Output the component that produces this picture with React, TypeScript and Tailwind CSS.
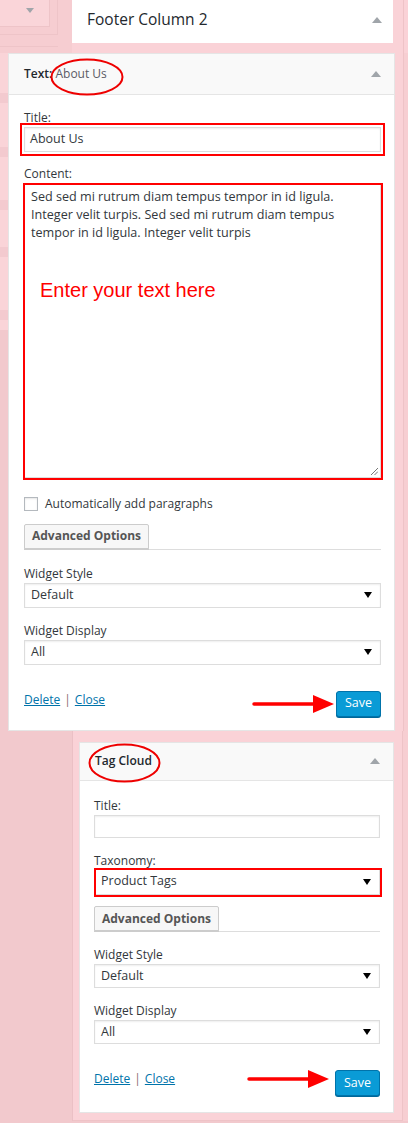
import React from "react";

function UpArrow() {
  return <span className="h-0 w-0 border-x-[5px] border-b-[6px] border-x-transparent border-b-[#a0a5aa]" />;
}

function DownCaret() {
  return <span className="h-0 w-0 border-x-[4px] border-t-[6px] border-x-transparent border-t-black" />;
}

function Label({ children }: { children: React.ReactNode }) {
  return <div className="text-[12px] leading-[18px] text-[#32373c]">{children}</div>;
}

function Select({ value, h = "h-[25px]" }: { value: string; h?: string }) {
  return (
    <div className={`flex ${h} items-center justify-between border border-[#ddd] bg-white pl-[6px] pr-[8px] text-[12.5px] text-[#32373c] shadow-[inset_0_1px_2px_rgba(0,0,0,0.07)]`}>
      <span>{value}</span>
      <DownCaret />
    </div>
  );
}

function RedArrow() {
  return (
    <svg width="82" height="18" viewBox="0 0 82 18">
      <line x1="2" y1="9" x2="64" y2="9" stroke="#f00" strokeWidth="3.5" strokeLinecap="round" />
      <polygon points="61,0 82,9 61,18" fill="#f00" />
    </svg>
  );
}

function Ellipse({ w, h }: { w: number; h: number }) {
  return (
    <svg width={w} height={h} viewBox={`0 0 ${w} ${h}`}>
      <ellipse cx={w / 2} cy={h / 2} rx={w / 2 - 1.5} ry={h / 2 - 1.5} fill="none" stroke="#e00" strokeWidth="2" />
    </svg>
  );
}

function AdvancedOptions() {
  return (
    <div className="border-b border-[#ddd]">
      <button className="h-[25px] w-[125px] rounded-t-[2px] border border-[#ccc] bg-[#f7f7f7] text-[12px] font-bold text-[#555] shadow-[0_1px_0_#ccc]">
        Advanced Options
      </button>
    </div>
  );
}

function WidgetFooter({ arrowGap, arrowShift }: { arrowGap: string; arrowShift: string }) {
  return (
    <div className="flex items-center">
      <div className="flex self-start text-[12px] leading-[18px]">
        <a className="text-[#0073aa] underline">Delete</a>
        <span className="mx-[4px] text-[#8a6a70]">|</span>
        <a className="text-[#0073aa] underline">Close</a>
      </div>
      <div className="flex-1" />
      <div className={`${arrowGap} ${arrowShift}`}>
        <RedArrow />
      </div>
      <button className="h-[26px] w-[45px] rounded-[3px] border border-[#0073aa] bg-[#0a9bd6] text-[12.5px] text-white shadow-[0_1px_0_#006799]">
        Save
      </button>
    </div>
  );
}

function LeftBands() {
  return (
    <div className="flex w-[8px] flex-col">
      <div className="h-[40px] bg-[#fad4d8]" />
      <div className="h-[10px] bg-[#f3cacf]" />
      <div className="h-[44px] bg-[#fad4d8]" />
      <div className="h-[10px] bg-[#f3cacf]" />
      <div className="h-[43px] bg-[#fad4d8]" />
      <div className="h-[10px] bg-[#f3cacf]" />
      <div className="h-[37px] bg-[#fad4d8]" />
      <div className="h-[10px] bg-[#f3cacf]" />
      <div className="h-[53px] bg-[#fad4d8]" />
      <div className="h-[10px] bg-[#f3cacf]" />
      <div className="h-[10px] bg-[#fad4d8]" />
      <div className="flex-1 bg-[#f2c9cd]" />
    </div>
  );
}

function RightStrip() {
  return (
    <div className="flex w-[13px]">
      <div className="w-[8px] bg-[#fad2d7]" />
      <div className="w-[1px] bg-[#eec3c7]" />
      <div className="flex-1 bg-[#f7ced2]" />
    </div>
  );
}

function TextWidget() {
  return (
    <div className="relative w-[387px] border border-[#e5e5e5] bg-white">
      <div className="flex h-[41px] items-center justify-between border-b border-[#e5e5e5] bg-[#f9f9f9] pl-[15px] pr-[13px] text-[12px]">
        <div>
          <span className="font-semibold text-[#23282d]">Text:</span> <span className="text-[#5b5b66]">About Us</span>
        </div>
        <UpArrow />
      </div>
      <div className="absolute left-[41px] top-[4px]">
        <Ellipse w={74} h={38} />
      </div>
      <div className="pb-[13px] pl-[15px] pr-[13px] pt-[14px]">
        <Label>Title:</Label>
        <div className="-mx-[4px] -my-[4px] border-2 border-[#f00] p-[2px]">
          <div className="flex h-[25px] items-center border border-[#ddd] bg-white px-[5px] text-[12.5px] text-[#32373c] shadow-[inset_0_1px_2px_rgba(0,0,0,0.07)]">
            About Us
          </div>
        </div>
        <div className="mt-[13px]">
          <Label>Content:</Label>
        </div>
        <div className="-ml-[1px] -mr-[2px] border-2 border-[#f00]">
          <div className="relative h-[293px] border-b border-r border-[#ddd] px-[6px] pt-[3px] text-[12.6px] leading-[18px] text-[#32373c]">
            <div>Sed sed mi rutrum diam tempus tempor in id ligula. Integer velit turpis. Sed sed mi rutrum diam tempus tempor in id ligula. Integer velit turpis</div>
            <div className="ml-[9px] mt-[36px] font-['Liberation_Sans',Arial,sans-serif] text-[20px] leading-[24px] text-[#f00]">
              Enter your text here
            </div>
            <svg className="absolute bottom-[2px] right-[2px]" width="7" height="7" viewBox="0 0 7 7">
              <line x1="0" y1="7" x2="7" y2="0" stroke="#777" strokeWidth="1" />
              <line x1="3.5" y1="7" x2="7" y2="3.5" stroke="#777" strokeWidth="1" />
            </svg>
          </div>
        </div>
        <div className="mt-[16px] flex items-center gap-[7px]">
          <span className="h-[14px] w-[14px] border border-[#b4b9be] bg-white shadow-[inset_0_1px_2px_rgba(0,0,0,0.1)]" />
          <span className="text-[12px] leading-[16px] text-[#32373c]">Automatically add paragraphs</span>
        </div>
        <div className="mt-[10px]">
          <AdvancedOptions />
        </div>
        <div className="mt-[15px]">
          <Label>Widget Style</Label>
        </div>
        <Select value="Default" />
        <div className="mt-[14px]">
          <Label>Widget Display</Label>
        </div>
        <Select value="All" />
        <div className="mt-[26px]">
          <WidgetFooter arrowGap="mr-[2px]" arrowShift="translate-y-[0px]" />
        </div>
      </div>
    </div>
  );
}

function TagCloudWidget() {
  return (
    <div className="relative w-[315px] border border-[#e5e5e5] bg-white">
      <div className="flex h-[38px] items-center justify-between border-b border-[#e5e5e5] bg-[#f9f9f9] pl-[15px] pr-[13px] text-[12px]">
        <span className="font-semibold text-[#23282d]">Tag Cloud</span>
        <UpArrow />
      </div>
      <div className="absolute left-[8px] top-[0px]">
        <Ellipse w={73} h={40} />
      </div>
      <div className="pb-[16px] pl-[14px] pr-[13px] pt-[16px]">
        <Label>Title:</Label>
        <div className="h-[23px] border border-[#ddd] bg-white shadow-[inset_0_1px_2px_rgba(0,0,0,0.07)]" />
        <div className="mt-[14px]">
          <Label>Taxonomy:</Label>
        </div>
        <div className="-mr-[2px] -my-[2px] border-2 border-[#f00]">
          <div className="flex h-[25px] items-center justify-between border-b border-r border-[#ddd] bg-white pl-[5px] pr-[8px] text-[12.5px] text-[#32373c]">
            <span>Product Tags</span>
            <DownCaret />
          </div>
        </div>
        <div className="mt-[10px]">
          <AdvancedOptions />
        </div>
        <div className="mt-[14px]">
          <Label>Widget Style</Label>
        </div>
        <Select value="Default" h="h-[24px]" />
        <div className="mt-[14px]">
          <Label>Widget Display</Label>
        </div>
        <Select value="All" h="h-[24px]" />
        <div className="mt-[26px]">
          <WidgetFooter arrowGap="mr-[6px]" arrowShift="-translate-y-[4px]" />
        </div>
      </div>
    </div>
  );
}

export default function App() {
  return (
    <div className="h-[1123px] w-[408px] overflow-hidden bg-[#f2c9cd] font-['Open_Sans',sans-serif]">
      {/* top row: sidebar stub + Footer Column 2 */}
      <div className="flex h-[53px]">
        <div className="flex w-[72px] bg-[#f6cdd1]">
          <div className="flex w-[58px] flex-col">
            <div className="flex h-[35px] border-b border-r border-[#eec4c8]">
              <div className="flex h-[27px] w-[50px] items-start justify-end border-b border-r border-[#eec4c8] bg-[#fad5d9] pr-[15px] pt-[8px]">
                <span className="h-0 w-0 border-x-[4px] border-t-[5px] border-x-transparent border-t-[#a0a5aa]" />
              </div>
            </div>
            <div className="mt-[11px] h-[1px] bg-[#eec4c8]" />
          </div>
        </div>
        <div className="flex flex-1 flex-col bg-[#fad2d7]">
          <div className="flex">
            <div className="flex h-[43px] w-[321px] items-center justify-between bg-white pb-[4px] pl-[15px] pr-[11px]">
              <span className="text-[15.5px] text-[#23282d]">Footer Column 2</span>
              <UpArrow />
            </div>
            <div className="w-[10px]" />
            <div className="w-[1px] bg-[#eec3c7]" />
          </div>
          <div className="flex flex-1 justify-end pr-[4px]">
            <div className="w-[1px] bg-[#eec3c7]" />
          </div>
        </div>
      </div>

      {/* text widget row */}
      <div className="flex">
        <LeftBands />
        <TextWidget />
        <RightStrip />
      </div>

      {/* tag cloud row */}
      <div className="flex">
        <div className="w-[73px] border-r border-[#ebc0c5] bg-[#f2c9cd]" />
        <div className="w-[330px] border-b border-r border-[#eec3c7] bg-[#fad2d7] pb-[7px] pl-[6px] pt-[11px]">
          <TagCloudWidget />
        </div>
        <div className="flex-1 bg-[#f7ced2]" />
      </div>
    </div>
  );
}
